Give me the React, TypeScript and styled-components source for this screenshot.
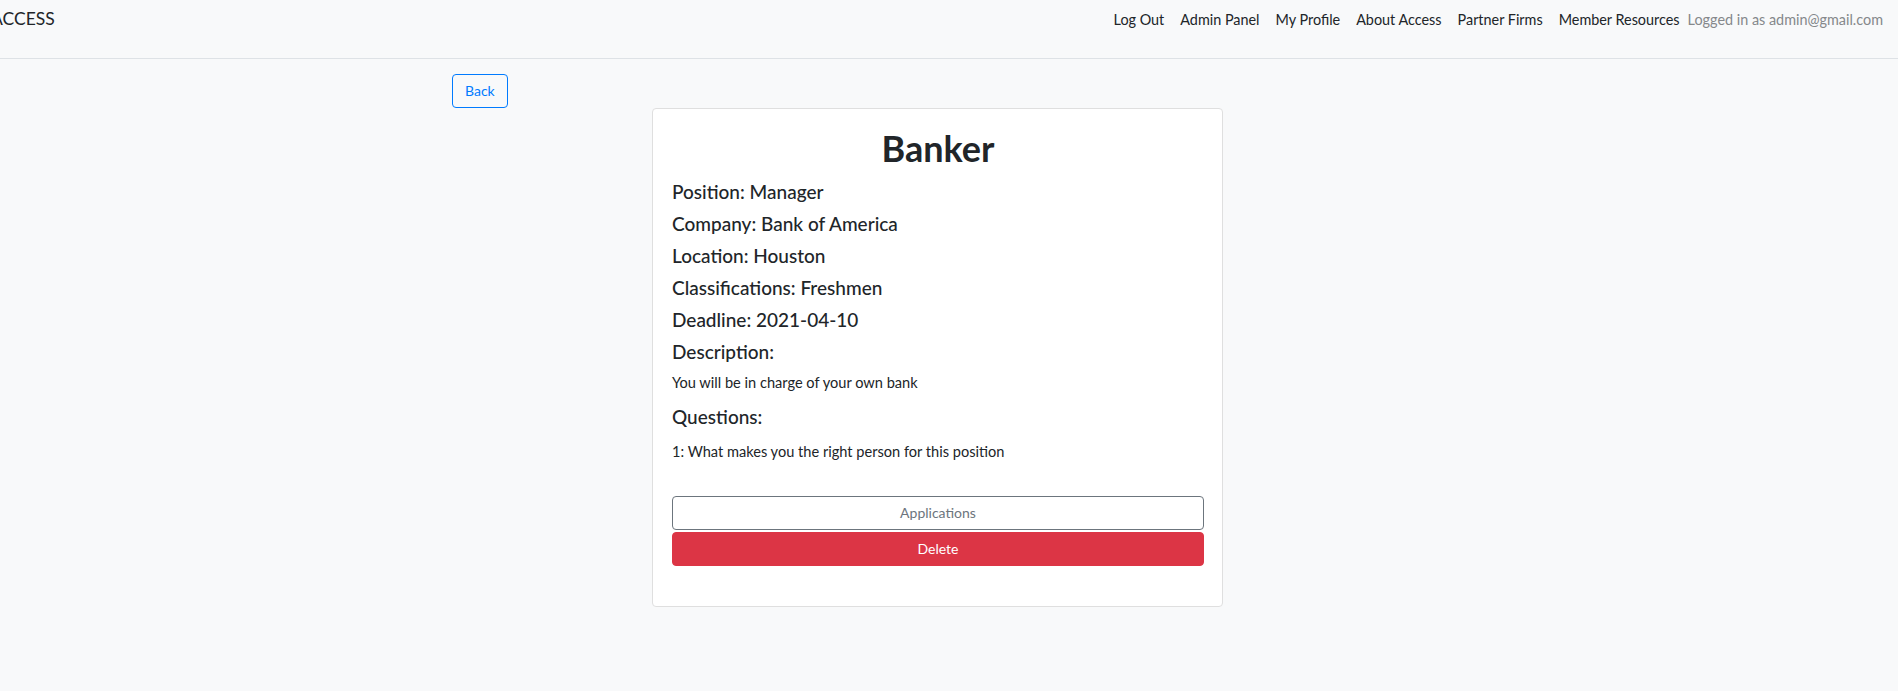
import React from "react";
import styled, { createGlobalStyle } from "styled-components";

const GlobalStyle = createGlobalStyle`
  * { box-sizing: border-box; }
  body {
    margin: 0;
    background: #f8f9fa;
    font-family: Lato, "Noto Sans", sans-serif;
    color: #212529;
    overflow: hidden;
  }
`;

const Navbar = styled.nav`
  display: flex;
  justify-content: space-between;
  align-items: flex-start;
  height: 59px;
  padding: 8px 15px 0 0;
  border-bottom: 1px solid #dee2e6;
  background: #f8f9fa;
`;

const Brand = styled.span`
  margin-left: -9px;
  font-size: 17.5px;
  font-weight: 400;
  line-height: 22px;
  color: #212529;
`;

const NavList = styled.div`
  display: flex;
  align-items: baseline;
`;

const NavLink = styled.a`
  padding: 0 8px;
  font-size: 14.4px;
  line-height: 24px;
  color: #212529;
  text-decoration: none;
`;

const LoggedIn = styled.span`
  font-size: 14.4px;
  line-height: 24px;
  color: #85888b;
`;

const Main = styled.main`
  padding: 15px 0 0 452px;
`;

const OutlineButton = styled.button<{ $tone: "primary" | "secondary"; $block?: boolean }>`
  display: block;
  width: ${(p) => (p.$block ? "100%" : "auto")};
  height: 34px;
  padding: 0 12px;
  border: 1px solid ${(p) => (p.$tone === "primary" ? "#007bff" : "#6c757d")};
  border-radius: 4px;
  background: ${(p) => (p.$block ? "#fff" : "transparent")};
  color: ${(p) => (p.$tone === "primary" ? "#007bff" : "#6c757d")};
  font-family: Lato, "Noto Sans", sans-serif;
  font-size: 14px;
  line-height: 20px;
  cursor: pointer;
`;

const DangerButton = styled.button`
  display: block;
  width: 100%;
  height: 34px;
  border: 1px solid #dc3545;
  border-radius: 4px;
  background: #dc3545;
  color: #fff;
  font-family: Lato, "Noto Sans", sans-serif;
  font-size: 14px;
  line-height: 20px;
  cursor: pointer;
`;

const Card = styled.section`
  width: 571px;
  margin-left: 200px;
  padding: 0 18px 40px 19px;
  background: #fff;
  border: 1px solid #dfdfdf;
  border-radius: 4px;
`;

const Title = styled.h1`
  margin: 18px 0 10px;
  font-size: 36px;
  font-weight: 700;
  line-height: 43px;
  text-align: center;
`;

const Field = styled.h5`
  margin: 0 0 8px;
  font-size: 19px;
  font-weight: 500;
  line-height: 24px;
`;

const BodyText = styled.p<{ $top?: number; $bottom?: number }>`
  margin: ${(p) => p.$top ?? 0}px 0 ${(p) => p.$bottom ?? 0}px;
  font-size: 14.6px;
  line-height: 22px;
`;

const ButtonStack = styled.div`
  display: flex;
  flex-direction: column;
  gap: 2px;
  margin-top: 33px;
`;

const fields = [
  ["Position", "Manager"],
  ["Company", "Bank of America"],
  ["Location", "Houston"],
  ["Classifications", "Freshmen"],
  ["Deadline", "2021-04-10"],
];

const links = ["Log Out", "Admin Panel", "My Profile", "About Access", "Partner Firms", "Member Resources"];

export default function App() {
  return (
    <>
      <GlobalStyle />
      <Navbar>
        <Brand>ACCESS</Brand>
        <NavList>
          {links.map((l) => (
            <NavLink key={l} href="#">
              {l}
            </NavLink>
          ))}
          <LoggedIn>Logged in as admin@gmail.com</LoggedIn>
        </NavList>
      </Navbar>
      <Main>
        <OutlineButton $tone="primary">Back</OutlineButton>
        <Card>
          <Title>Banker</Title>
          {fields.map(([k, v]) => (
            <Field key={k}>
              {k}: {v}
            </Field>
          ))}
          <Field>Description:</Field>
          <BodyText $bottom={11}>You will be in charge of your own bank</BodyText>
          <Field>Questions:</Field>
          <BodyText $top={12}>1: What makes you the right person for this position</BodyText>
          <ButtonStack>
            <OutlineButton $tone="secondary" $block>
              Applications
            </OutlineButton>
            <DangerButton>Delete</DangerButton>
          </ButtonStack>
        </Card>
      </Main>
    </>
  );
}
